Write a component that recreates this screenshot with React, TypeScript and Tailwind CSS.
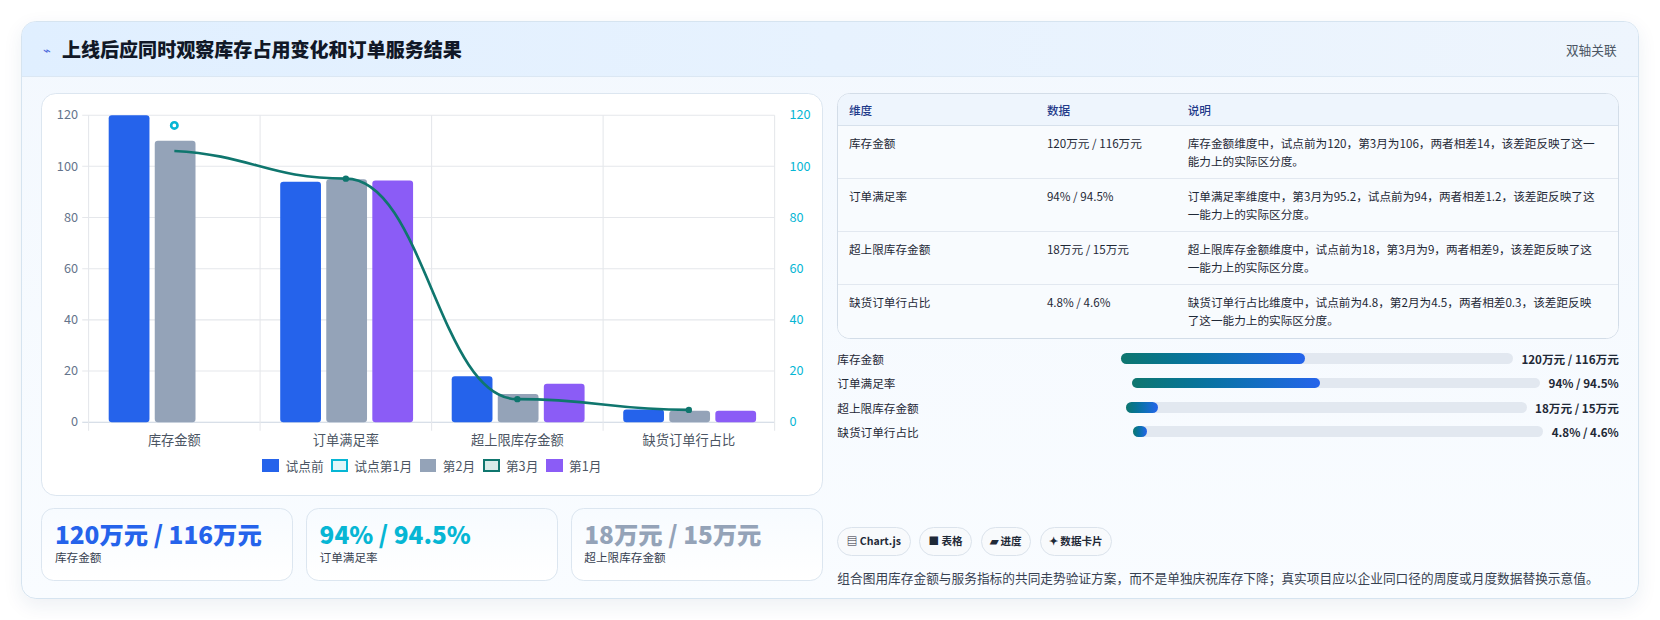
import React from "react";

const cats = ["库存金额", "订单满足率", "超上限库存金额", "缺货订单行占比"];
const bars = [
  [120, 110, null],
  [94, 95, 94.5],
  [18, 11, 15],
  [5, 4.5, 4.5],
];
const colors = ["#2563eb", "#94a3b8", "#8b5cf6"];
const line = [106, 95.2, 9, 4.8];

function Chart() {
  const left = 44, top = 20, w = 648, h = 290;
  const cw = w / 4;
  const y = (v: number) => top + h - (v * h) / 120;
  const cx = (i: number) => left + cw * i + cw / 2;
  const pts = line.map((v, i) => [cx(i), y(v)]);
  let d = `M${pts[0][0]},${pts[0][1]}`;
  for (let i = 0; i < 3; i++) {
    const [x1, y1] = pts[i], [x2, y2] = pts[i + 1];
    const dx = (x2 - x1) / 2.2;
    d += ` C${x1 + dx},${i === 0 ? y1 + 4 : y1} ${x2 - dx},${y2} ${x2},${y2}`;
  }
  return (
    <svg width="736" height="340" className="block">
      {[0, 20, 40, 60, 80, 100, 120].map((t) => (
        <g key={t}>
          <line x1={left - 6} x2={left + w} y1={y(t)} y2={y(t)} stroke={t === 0 ? "#cbd5e1" : "#e5e7eb"} />
          <text x={left - 10} y={y(t) + 4} textAnchor="end" fontSize="12" fill="#64748b">{t}</text>
          <text x={left + w + 14} y={y(t) + 4} fontSize="12" fill="#06b6d4">{t}</text>
        </g>
      ))}
      {[0, 1, 2, 3, 4].map((i) => (
        <line key={i} x1={left + cw * i} x2={left + cw * i} y1={top} y2={top + h + 8} stroke="#e5e7eb" />
      ))}
      {bars.map((g, i) =>
        g.map((v, j) =>
          v == null ? null : (
            <rect key={i + "-" + j} x={cx(i) - 62 + j * 43.5} y={y(v)} width={38.5} height={(v * h) / 120} rx={3} fill={colors[j]} />
          )
        )
      )}
      <path d={d} fill="none" stroke="#0f766e" strokeWidth="2.5" />
      {pts.map(([a, b], i) => (
        <circle key={i} cx={a} cy={b} r={i === 0 ? 0 : 3} fill="#0f766e" />
      ))}
      <circle cx={cx(0)} cy={y(116)} r={3} fill="#fff" stroke="#06b6d4" strokeWidth="2.5" />
      {cats.map((c, i) => (
        <text key={c} x={cx(i)} y={top + h + 22} textAnchor="middle" fontSize="12.5" fill="#4b5563">{c}</text>
      ))}
    </svg>
  );
}

function Legend() {
  const items: [string, string][] = [
    ["试点前", "bg-[#2563eb] border-[#2563eb]"],
    ["试点第1月", "bg-[#e0f7fa] border-[#06b6d4]"],
    ["第2月", "bg-[#94a3b8] border-[#94a3b8]"],
    ["第3月", "bg-[#d9ece9] border-[#0f766e]"],
    ["第1月", "bg-[#8b5cf6] border-[#8b5cf6]"],
  ];
  return (
    <div className="flex justify-center gap-[7px] text-[12px] text-[#4b5563] mt-[2px]">
      {items.map(([t, c]) => (
        <div key={t} className="flex items-center gap-[6px]">
          <span className={`w-[16px] h-[12px] border-2 ${c}`} />
          {t}
        </div>
      ))}
    </div>
  );
}

const rows = [
  ["库存金额", "120万元 / 116万元", "库存金额维度中，试点前为120，第3月为106，两者相差14，该差距反映了这一能力上的实际区分度。"],
  ["订单满足率", "94% / 94.5%", "订单满足率维度中，第3月为95.2，试点前为94，两者相差1.2，该差距反映了这一能力上的实际区分度。"],
  ["超上限库存金额", "18万元 / 15万元", "超上限库存金额维度中，试点前为18，第3月为9，两者相差9，该差距反映了这一能力上的实际区分度。"],
  ["缺货订单行占比", "4.8% / 4.6%", "缺货订单行占比维度中，试点前为4.8，第2月为4.5，两者相差0.3，该差距反映了这一能力上的实际区分度。"],
];

const progress: [string, number, string, number][] = [
  ["库存金额", 47, "120万元 / 116万元", 268],
  ["订单满足率", 46, "94% / 94.5%", 278],
  ["超上限库存金额", 8, "18万元 / 15万元", 273],
  ["缺货订单行占比", 3.5, "4.8% / 4.6%", 279],
];

export default function App() {
  return (
    <div className="w-[1568px] h-[585px] bg-white p-[20px] [zoom:1.0587]" style={{ fontFamily: '"Noto Sans CJK SC", "Noto Sans", sans-serif' }}>
      <div className="w-[1528px] h-[546px] rounded-[14px] border border-[#d6e4f0] bg-gradient-to-b from-[#f3f8fe] to-[#f9fcff] overflow-hidden shadow-[0_6px_18px_rgba(30,64,120,0.08)]">
        <div className="h-[52px] bg-gradient-to-r from-[#e0efff] to-[#eef5fd] border-b border-[#dbe7f3] flex items-center px-[20px]">
          <span className="text-[#4f6bdc] text-[12px] mr-[10px]">⌁</span>
          <span className="text-[18px] font-black text-[#111827]">上线后应同时观察库存占用变化和订单服务结果</span>
          <span className="ml-auto text-[12px] text-[#4b5563]">双轴关联</span>
        </div>
        <div className="flex gap-[14px] px-[18px] pt-[15px]">
          <div className="w-[738px] flex flex-col gap-[11px]">
            <div className="h-[381px] rounded-[14px] border border-[#dce6f0] bg-white">
              <Chart />
              <Legend />
            </div>
            <div className="flex gap-[12px]">
              {[
                ["120万元 / 116万元", "库存金额", "text-[#2563eb]"],
                ["94% / 94.5%", "订单满足率", "text-[#06b6d4]"],
                ["18万元 / 15万元", "超上限库存金额", "text-[#94a3b8]"],
              ].map(([v, l, c]) => (
                <div key={l} className="w-[238px] h-[69px] rounded-[12px] border border-[#dce6f0] bg-gradient-to-b from-[#f7fbff] to-white px-[12px] pt-[8px]">
                  <div className={`text-[23px] font-black leading-[30px] ${c}`}>{v}</div>
                  <div className="text-[11px] text-[#374151] leading-[16px]">{l}</div>
                </div>
              ))}
            </div>
          </div>
          <div className="flex-1 flex flex-col">
            <div className="rounded-[12px] border border-[#d3dde8] bg-white overflow-hidden">
              <div className="grid grid-cols-[187px_133px_1fr] h-[30px] items-center bg-[#eef5fd] border-b border-[#d7e1ec] text-[11px] font-medium text-[#1e3a8a] px-[10px]">
                <div>维度</div><div>数据</div><div>说明</div>
              </div>
              {rows.map((r, i) => (
                <div key={r[0]} className={`grid grid-cols-[187px_133px_1fr] h-[50px] pt-[8px] px-[10px] text-[11px] leading-[17px] text-[#1f2937] bg-[#f8fbfe] ${i < 3 ? "border-b border-[#e2e8f0]" : ""}`}>
                  <div>{r[0]}</div><div>{r[1]}</div><div className="pr-[6px]">{r[2]}</div>
                </div>
              ))}
            </div>
            <div className="flex flex-col gap-[7px] mt-[11px]">
              {progress.map(([l, p, v, s]) => (
                <div key={l} className="flex items-center h-[16px] text-[11px] text-[#1f2937]">
                  <div className="shrink-0" style={{ width: s }}>{l}</div>
                  <div className="flex-1 h-[10px] rounded-full bg-[#e2e8f0] mr-[8px]">
                    <div className="h-full rounded-full bg-gradient-to-r from-[#0f766e] to-[#2563eb]" style={{ width: `${p}%`, minWidth: 12 }} />
                  </div>
                  <div className="font-bold whitespace-nowrap">{v}</div>
                </div>
              ))}
            </div>
            <div className="flex gap-[8px] mt-[82px]">
              {["▤ Chart.js", "■ 表格", "▰ 进度", "✦ 数据卡片"].map((t) => (
                <span key={t} className="h-[27px] px-[8px] rounded-full border border-[#dbe3ec] bg-[#f8fafc] text-[10px] font-bold text-[#1f2937] flex items-center">{t}</span>
              ))}
            </div>
            <div className="text-[12px] text-[#374151] mt-[12px]">组合图用库存金额与服务指标的共同走势验证方案，而不是单独庆祝库存下降；真实项目应以企业同口径的周度或月度数据替换示意值。</div>
          </div>
        </div>
      </div>
    </div>
  );
}
